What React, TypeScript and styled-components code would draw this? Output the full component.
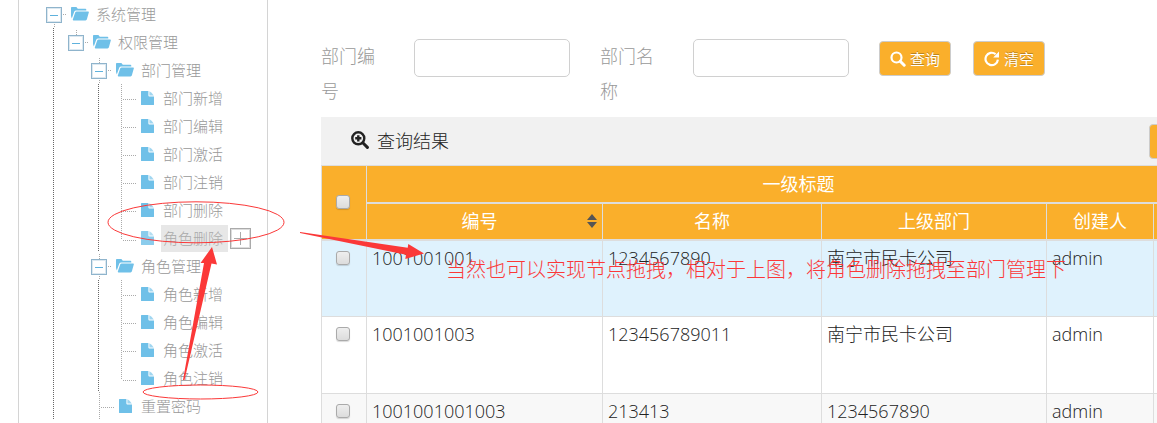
import React from 'react';
import styled, { createGlobalStyle, css } from 'styled-components';

const Global = createGlobalStyle`
  *, *::before, *::after { box-sizing: border-box; }
  body {
    margin: 0;
    background: #fff;
    font-family: "Open Sans", "Noto Sans CJK SC", sans-serif;
    font-weight: 300;
    color: #222;
  }
  ul { margin: 0; padding: 0; list-style: none; }
  button, input { font: inherit; }
`;

const orange = '#faaf2b';
const line = '#dddddd';
const blue = '#6fc0e8';

const Shell = styled.div`
  position: relative;
  display: flex;
  height: 100vh;
  padding-left: 18px;
  overflow: hidden;
`;

/* ---------- tree ---------- */

const Sidebar = styled.nav`
  flex: none;
  width: 250px;
  padding-left: 27px;
  border: solid #d4d4d4;
  border-width: 0 1px;
`;

const Children = styled.ul<{ $rail: boolean }>`
  padding-left: 23px;
  ${(p) =>
    p.$rail &&
    css`
      padding-left: 22px;
      background: repeating-linear-gradient(#666 0 1px, transparent 1px 2px) 7px 0 / 1px 100% no-repeat;
    `}
`;

const Row = styled.div<{ $above: boolean; $below: boolean }>`
  display: flex;
  align-items: center;
  height: 28px;
  background:
    repeating-linear-gradient(#aaa 0 1px, transparent 1px 2px) 8px 2px / 1px ${(p) => (p.$above ? '6px' : '0')} no-repeat,
    repeating-linear-gradient(#aaa 0 1px, transparent 1px 2px) 8px 24px / 1px ${(p) => (p.$below ? '4px' : '0')} no-repeat;
`;

const Toggle = styled.button`
  display: grid;
  place-items: center;
  width: 16px;
  height: 16px;
  margin-top: 2px;
  padding: 0;
  border: 1px solid #8fb4cc;
  outline: 1px solid #dce8f0;
  outline-offset: -2px;
  background: #fff;
  &::before {
    content: "";
    width: 8px;
    height: 1px;
    background: #5fb2dd;
  }
`;

const Dash = styled.span`
  width: 9px;
  height: 1px;
  margin-top: 1px;
  background: repeating-linear-gradient(90deg, transparent 0 1px, #aaa 1px 2px) 0 0 / 5px 1px no-repeat;
`;

const Branch = styled.span<{ $last: boolean }>`
  width: 25px;
  height: 28px;
  background:
    repeating-linear-gradient(#aaa 0 1px, transparent 1px 2px) 8px 0 / 1px ${(p) => (p.$last ? '16px' : '28px')} no-repeat,
    repeating-linear-gradient(90deg, #aaa 0 1px, transparent 1px 2px) 10px ${(p) => (p.$last ? '16px' : '15px')} / 13px 1px no-repeat;
`;

const IconSlot = styled.span<{ $faded?: boolean }>`
  display: grid;
  place-items: center;
  width: 18px;
  opacity: ${(p) => (p.$faded ? 0.8 : 1)};
`;

const Name = styled.a<{ $selected?: boolean }>`
  margin-left: 5px;
  padding: 0 5px 0 2px;
  font-size: 15px;
  line-height: 27px;
  color: ${(p) => (p.$selected ? '#aaa' : '#999')};
  background: ${(p) => (p.$selected ? '#e7e7e7' : 'transparent')};
  text-decoration: none;
  white-space: nowrap;
`;

const AddButton = styled.button`
  display: grid;
  place-items: center;
  width: 21px;
  height: 21px;
  margin-left: 2px;
  padding: 0;
  border: 1px solid #aaa;
  outline: 1px solid #ddd;
  outline-offset: -2px;
  background: #fff;
`;

const FolderIcon = () => (
  <svg width="18" height="14" viewBox="0 0 18 14" aria-hidden="true">
    <path fill={blue} d="M0 0.8Q0 0 .8 0H5.4L6.8 1.8H14.4Q15.3 1.8 15.3 2.8V3.6H5.2Q3.8 3.6 3.2 4.8L.8 11.6L0 9Z" />
    <path fill={blue} d="M5.6 4.6H17.2Q18 4.6 17.8 5.4L15.8 12.6Q15.5 13.4 14.6 13.4H2.4Q1.6 13.4 1.8 12.6L4.2 5.6Q4.6 4.6 5.6 4.6Z" />
  </svg>
);

const FileIcon = () => (
  <svg width="13" height="14" viewBox="0 0 13 14" aria-hidden="true">
    <path fill={blue} d="M.6 0H7.4V4.6Q7.4 5.6 8.4 5.6H13V13.4Q13 14 12.4 14H.6Q0 14 0 13.4V.6Q0 0 .6 0Z" />
    <path fill={blue} opacity=".65" d="M8.4 .2Q10.6 1 12.8 4.6H8.4Z" />
  </svg>
);

type TreeNode = { name: string; selected?: boolean; rail?: boolean; children?: TreeNode[] };

const tree: TreeNode[] = [
  {
    name: '系统管理',
    rail: true,
    children: [
      {
        name: '权限管理',
        children: [
          {
            name: '部门管理',
            rail: true,
            children: [
              { name: '部门新增' },
              { name: '部门编辑' },
              { name: '部门激活' },
              { name: '部门注销' },
              { name: '部门删除' },
              { name: '角色删除', selected: true },
            ],
          },
          {
            name: '角色管理',
            rail: true,
            children: [{ name: '角色新增' }, { name: '角色编辑' }, { name: '角色激活' }, { name: '角色注销' }],
          },
          { name: '重置密码', rail: true },
        ],
      },
    ],
  },
];

const Node = ({ node, last, root = false }: { node: TreeNode; last: boolean; root?: boolean }) => (
  <li>
    <Row $above={!!node.children && !root} $below={!!node.children && !!node.rail}>
      {node.children ? (
        <>
          <Toggle type="button" aria-label={`收起${node.name}`} />
          <Dash />
        </>
      ) : (
        <Branch $last={last && !node.rail} />
      )}
      <IconSlot $faded={node.selected}>{node.children ? <FolderIcon /> : <FileIcon />}</IconSlot>
      <Name href="#" $selected={node.selected}>{node.name}</Name>
      {node.selected && (
        <AddButton type="button" aria-label="新增节点">
          <svg width="15" height="15" viewBox="0 0 15 15" aria-hidden="true">
            <path d="M7.5 1V14M1 7.5H14" stroke="#aaa" />
          </svg>
        </AddButton>
      )}
    </Row>
    {node.children && (
      <Children $rail={!!node.rail}>
        {node.children.map((c, i) => (
          <Node key={c.name} node={c} last={i === node.children!.length - 1} />
        ))}
      </Children>
    )}
  </li>
);

/* ---------- filter form ---------- */

const Main = styled.main`
  flex: 1;
  min-width: 0;
  padding: 39px 0 0 53px;
`;

const Filters = styled.form`
  display: flex;
  align-items: flex-start;
  height: 78px;
`;

const Field = styled.div`
  display: flex;
  flex: none;
  gap: 30px;
  margin-right: 30px;
`;

const FieldLabel = styled.label`
  width: 63px;
  font-size: 18px;
  line-height: 35px;
  color: #999;
`;

const TextInput = styled.input`
  width: 156px;
  height: 38px;
  padding: 0 8px;
  border: 1px solid #d0d0d0;
  border-radius: 5px;
  background: #fff;
  font-size: 18px;
`;

const ActionButton = styled.button`
  display: flex;
  flex: none;
  align-items: center;
  justify-content: center;
  gap: 4px;
  height: 35px;
  padding: 0 10px;
  border: 1px solid #ccc;
  border-radius: 4px;
  background: ${orange};
  color: #fff;
  font-size: 15px;
  font-weight: 400;
  text-shadow: 0 -1px 0 rgba(0, 0, 0, 0.25);
`;

const FormActions = styled.div`
  display: flex;
  gap: 22px;
  padding-top: 2px;
`;

const SearchIcon = () => (
  <svg width="16" height="16" viewBox="0 0 16 16" fill="none" stroke="#fff" aria-hidden="true">
    <circle cx="6.5" cy="6.5" r="5" strokeWidth="2.2" />
    <path d="M10.2 10.2L14.2 14.2" strokeWidth="3" strokeLinecap="round" />
  </svg>
);

const RefreshIcon = () => (
  <svg width="16" height="16" viewBox="0 0 16 16" aria-hidden="true">
    <path d="M13.9 8.6A6.2 6.2 0 1 1 11.6 3.1" fill="none" stroke="#fff" strokeWidth="2.2" />
    <path d="M15 .6V6.4H9.2Z" fill="#fff" />
  </svg>
);

const ZoomInIcon = () => (
  <svg width="18" height="18" viewBox="0 0 18 18" fill="none" stroke="#222" aria-hidden="true">
    <circle cx="7.3" cy="7.3" r="6" strokeWidth="2.4" />
    <path d="M11.8 11.8L16.4 16.4" strokeWidth="3" strokeLinecap="round" />
    <path d="M7.3 4.2V10.4M4.2 7.3H10.4" strokeWidth="2.4" />
  </svg>
);

/* ---------- results ---------- */

const Results = styled.section`
  min-width: 910px;
`;

const ResultsBar = styled.header`
  display: flex;
  align-items: center;
  justify-content: space-between;
  height: 48px;
  padding: 0 10px 2px 30px;
  background: #f1f1f1;
`;

const ResultsTitle = styled.h2`
  display: flex;
  align-items: center;
  gap: 8px;
  margin: 0;
  font-size: 18px;
  font-weight: 300;
`;

const ResultsActions = styled.div`
  padding-top: 3px;
`;

const Table = styled.table`
  width: 910px;
  border-collapse: collapse;
  table-layout: fixed;
  font-size: 18px;
  line-height: 26px;
`;

const Th = styled.th`
  height: 37px;
  padding: 0 5px;
  border: 1px solid ${line};
  border-bottom-width: 2px;
  background: ${orange};
  color: #fff;
  font-weight: 400;
`;

const Sortable = styled.div`
  display: grid;
  grid-template-columns: 1fr 10px;
  align-items: center;
`;

const Tr = styled.tr<{ $tone: 'active' | 'plain' | 'stripe' }>`
  height: 77px;
  background: ${(p) => ({ active: '#dff2fd', plain: '#fff', stripe: '#f8f8f8' })[p.$tone]};
`;

const Td = styled.td<{ $center?: boolean }>`
  padding: 4px 5px;
  border: 1px solid ${line};
  vertical-align: top;
  text-align: ${(p) => (p.$center ? 'center' : 'left')};
`;

const Check = styled.input`
  appearance: none;
  width: 14px;
  height: 14px;
  margin: 0 2px 4px 0;
  border: 1px solid #aaa;
  border-radius: 3px;
  background: linear-gradient(#eee, #dcdcdc);
  box-shadow: 0 1px 1px rgba(0, 0, 0, 0.15);
  vertical-align: middle;
`;

const rows = [
  ['1001001001', '1234567890', '南宁市民卡公司', 'admin'],
  ['1001001003', '123456789011', '南宁市民卡公司', 'admin'],
  ['1001001001003', '213413', '1234567890', 'admin'],
];
const tones = ['active', 'plain', 'stripe'] as const;

/* ---------- annotations ---------- */

const Marks = styled.svg`
  position: absolute;
  top: 0;
  left: 0;
  pointer-events: none;
`;

const Note = styled.p`
  position: absolute;
  top: 255px;
  left: 446px;
  margin: 0;
  font-size: 20px;
  line-height: 30px;
  color: #fb3838;
  white-space: nowrap;
  pointer-events: none;
`;

export default function App() {
  return (
    <>
      <Global />
      <Shell>
        <Sidebar>
          <ul>
            {tree.map((n) => (
              <Node key={n.name} node={n} last root />
            ))}
          </ul>
        </Sidebar>
        <Main>
          <Filters onSubmit={(e) => e.preventDefault()}>
            <Field>
              <FieldLabel htmlFor="dept-code">部门编号</FieldLabel>
              <TextInput id="dept-code" type="text" />
            </Field>
            <Field>
              <FieldLabel htmlFor="dept-name">部门名称</FieldLabel>
              <TextInput id="dept-name" type="text" />
            </Field>
            <FormActions>
              <ActionButton type="submit"><SearchIcon />查询</ActionButton>
              <ActionButton type="reset"><RefreshIcon />清空</ActionButton>
            </FormActions>
          </Filters>
          <Results>
            <ResultsBar>
              <ResultsTitle><ZoomInIcon />查询结果</ResultsTitle>
              <ResultsActions>
                <ActionButton type="button"><SearchIcon />查询</ActionButton>
              </ResultsActions>
            </ResultsBar>
            <Table>
              <colgroup>
                <col style={{ width: 45 }} />
                <col style={{ width: 236 }} />
                <col style={{ width: 219 }} />
                <col style={{ width: 225 }} />
                <col style={{ width: 107 }} />
                <col />
              </colgroup>
              <thead>
                <tr>
                  <Th rowSpan={2}><Check type="checkbox" aria-label="全选" /></Th>
                  <Th colSpan={5}>一级标题</Th>
                </tr>
                <tr>
                  <Th>
                    <Sortable>
                      编号
                      <svg width="10" height="14" viewBox="0 0 10 14" aria-hidden="true">
                        <path d="M5 0L10 6H0ZM0 8H10L5 14Z" fill="#555" />
                      </svg>
                    </Sortable>
                  </Th>
                  <Th>名称</Th>
                  <Th>上级部门</Th>
                  <Th>创建人</Th>
                  <Th />
                </tr>
              </thead>
              <tbody>
                {rows.map((cells, i) => (
                  <Tr key={cells[0]} $tone={tones[i]}>
                    <Td $center><Check type="checkbox" aria-label={`选择 ${cells[0]}`} /></Td>
                    {cells.map((c, j) => (
                      <Td key={j}>{c}</Td>
                    ))}
                    <Td />
                  </Tr>
                ))}
              </tbody>
            </Table>
          </Results>
        </Main>
        <Marks width="460" height="423" viewBox="0 0 460 423" aria-hidden="true">
          <g fill="none" stroke="#fb3838">
            <ellipse cx="196" cy="222.3" rx="88" ry="20.5" />
            <ellipse cx="200.5" cy="392" rx="57.5" ry="7" />
          </g>
          <g fill="#fb3838">
            <path d="M300 232L407.7 247.7L408.3 244L424 253.5L405.3 259L406 254.7L300 233Z" />
            <path d="M183 380L204 263L200.5 263L212 247L217 264.5L211.5 263.5L184.5 380Z" />
          </g>
        </Marks>
        <Note>当然也可以实现节点拖拽，相对于上图，将角色删除拖拽至部门管理下</Note>
      </Shell>
    </>
  );
}
